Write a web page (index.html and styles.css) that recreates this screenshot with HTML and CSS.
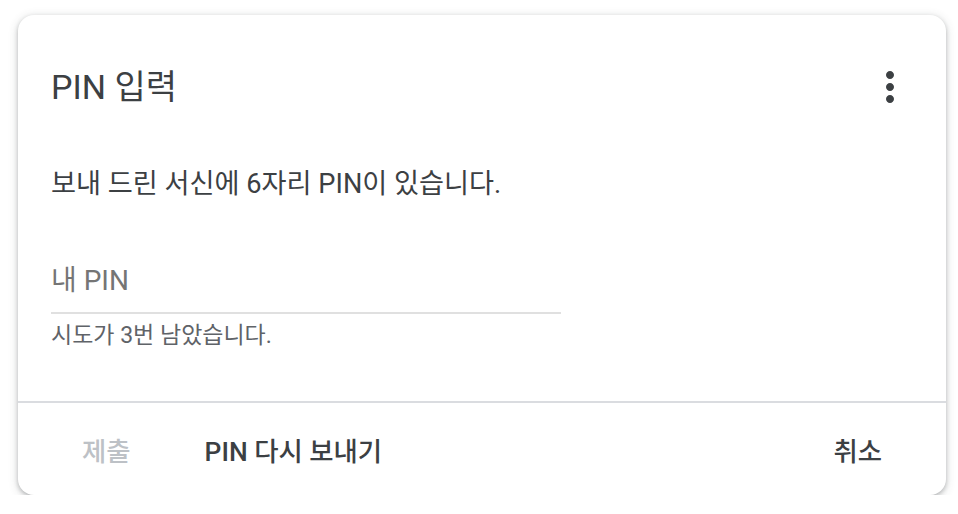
FILE: index.html
```html
<!DOCTYPE html>
<html lang="ko">
<head>
<meta charset="utf-8">
<link rel="stylesheet" href="styles.css">
</head>
<body>
<div class="card">
  <div class="header">
    <h1 class="title">PIN 입력</h1>
    <button class="more" aria-label="more">
      <svg width="48" height="48" viewBox="0 0 24 24"><path fill="#3c4043" d="M12 8c1.1 0 2-.9 2-2s-.9-2-2-2-2 .9-2 2 .9 2 2 2zm0 2c-1.1 0-2 .9-2 2s.9 2 2 2 2-.9 2-2-.9-2-2-2zm0 6c-1.1 0-2 .9-2 2s.9 2 2 2 2-.9 2-2-.9-2-2-2z"/></svg>
    </button>
  </div>
  <div class="content">
    <p class="desc">보내 드린 서신에 6자리 PIN이 있습니다.</p>
    <div class="field">
      <div class="input">내 PIN</div>
      <div class="helper">시도가 3번 남았습니다.</div>
    </div>
  </div>
  <div class="footer">
    <div class="left">
      <button class="btn disabled">제출</button>
      <button class="btn">PIN 다시 보내기</button>
    </div>
    <button class="btn">취소</button>
  </div>
</div>
</body>
</html>
```
FILE: styles.css
```css
* { box-sizing: border-box; }
html, body { margin: 0; padding: 0; background: #fff; }
body {
  font-family: Roboto, "Noto Sans CJK KR", sans-serif;
  color: #3c4043;
  padding: 15px 12px 0 18px;
}
.card {
  width: 928px;
  height: 480px;
  border-radius: 16px;
  background: #fff;
  box-shadow: 0 2px 4px rgba(60,64,67,0.3), 0 2px 8px 2px rgba(60,64,67,0.12);
  display: flex;
  flex-direction: column;
}
.header {
  display: flex;
  align-items: center;
  justify-content: space-between;
  padding: 48px 32px 0 33px;
}
.title {
  margin: 0;
  font-size: 34px;
  font-weight: 400;
  line-height: 48px;
  color: #3c4043;
}
.more {
  border: 0;
  background: none;
  padding: 0;
  width: 48px;
  height: 48px;
  display: flex;
}
.content {
  padding: 0 32px 0 33px;
  flex: 1;
}
.desc {
  margin: 53px 0 0;
  font-size: 27.2px;
  line-height: 40px;
  color: #3c4043;
}
.field {
  width: 510px;
  margin-top: 57px;
}
.input {
  font-size: 28px;
  line-height: 40px;
  color: #757575;
  padding-bottom: 11px;
  border-bottom: 2px solid #e0e0e0;
}
.helper {
  margin-top: 6px;
  font-size: 23px;
  line-height: 32px;
  color: #5f6368;
}
.footer {
  border-top: 2px solid #dadce0;
  height: 94px;
  display: flex;
  align-items: center;
  justify-content: space-between;
  padding: 0 64px 0 64px;
}
.left { display: flex; gap: 74px; }
.btn {
  border: 0;
  background: none;
  padding: 0;
  font-family: Roboto, "Noto Sans CJK KR", sans-serif;
  font-size: 26.4px;
  font-weight: 500;
  color: #3c4043;
}
.btn.disabled { color: #bdc1c6; }
```
